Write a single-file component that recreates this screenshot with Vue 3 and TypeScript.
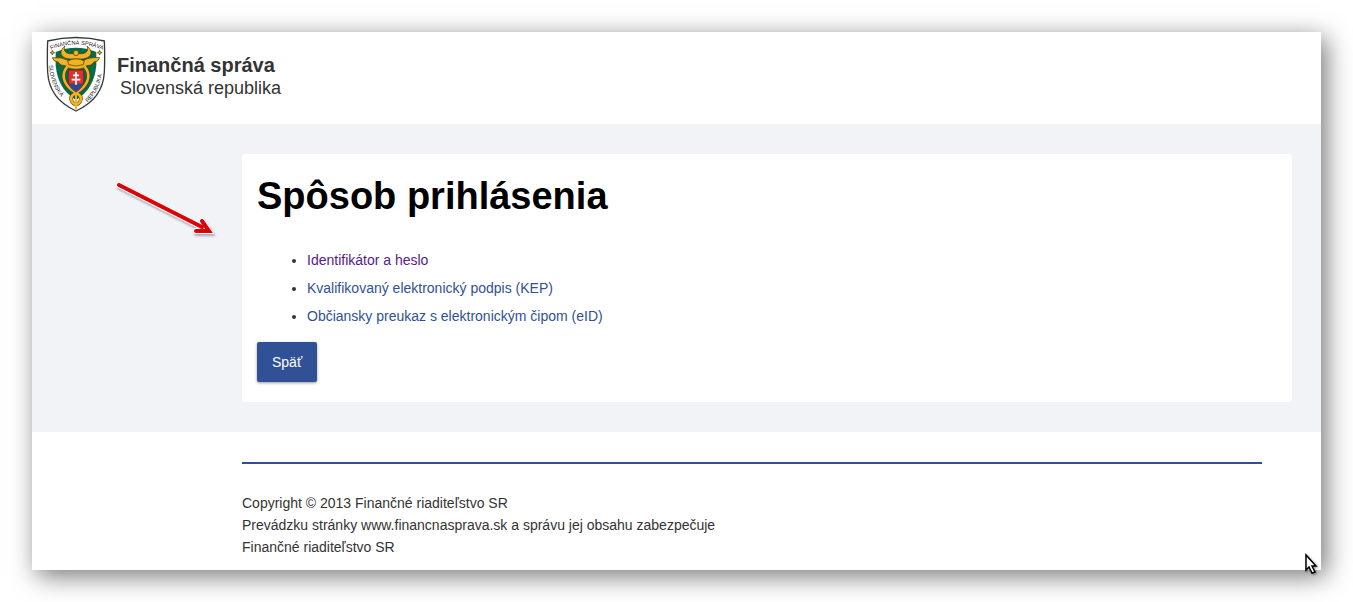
<script setup lang="ts">
interface LoginMethod {
  label: string
  href: string
  visited: boolean
}

const methods: LoginMethod[] = [
  { label: 'Identifikátor a heslo', href: '#heslo', visited: true },
  { label: 'Kvalifikovaný elektronický podpis (KEP)', href: '#kep', visited: false },
  { label: 'Občiansky preukaz s elektronickým čipom (eID)', href: '#eid', visited: false },
]

const footerLines: string[] = [
  'Copyright © 2013 Finančné riaditeľstvo SR',
  'Prevádzku stránky www.financnasprava.sk a správu jej obsahu zabezpečuje',
  'Finančné riaditeľstvo SR',
]
</script>

<template>
  <div class="stage">
    <div class="window">
      <header class="header">
        <svg class="crest" viewBox="26 16 186 231" aria-hidden="true">
          <defs>
            <path id="arc-top" d="M44 57 Q119 26 200 58" />
            <path id="arc-left" d="M38 98 C40 146 54 188 102 224" />
            <path id="arc-right" d="M148 221 C186 188 198 146 201 88" />
          </defs>
          <path d="M34 31 Q119 10 204 31 Q206 80 204 125 C201 180 168 219 119 241 C70 219 37 180 34 125 Q32 80 34 31Z" fill="#fff" stroke="#333b36" stroke-width="4" />
          <path d="M58 64 Q119 38 180 64 L180 104 C176 150 157 186 119 208 C81 186 62 150 58 104Z" fill="#086b45" />
          <g fill="#f0b323" stroke="#49340c" stroke-width="2">
            <path d="M48 59 L50 64 L55 66 L50 68 L48 73 L46 68 L41 66 L46 64Z" />
            <path d="M190 59 L192 64 L197 66 L192 68 L190 73 L188 68 L183 66 L188 64Z" />
            <path d="M48 81 Q76 78 98 90 L140 90 Q162 78 190 81 L184 91 L173 94 L164 103 L151 105 L144 112 Q119 120 94 112 L87 105 L74 103 L65 94 L54 91Z" />
            <path d="M102 85 C74 84 64 63 86 46 C80 60 89 70 104 69 L134 69 C149 70 158 60 152 46 C174 63 164 84 136 85Z" />
            <circle cx="119" cy="67" r="8" />
            <path d="M94 91 Q119 78 144 91 L141 102 Q119 110 97 102Z" />
          </g>
          <g fill="none" stroke="#49340c" stroke-width="11">
            <path d="M93 108 C72 132 84 160 104 176 C120 188 142 194 131 213 Q128 218 121 222" />
            <path d="M145 108 C166 132 154 160 134 176 C118 188 96 194 107 213 Q110 218 117 222" />
          </g>
          <g fill="none" stroke="#f0b323" stroke-width="8">
            <path d="M93 108 C72 132 84 160 104 176 C120 188 142 194 131 213 Q128 218 121 222" />
            <path d="M145 108 C166 132 154 160 134 176 C118 188 96 194 107 213 Q110 218 117 222" />
            <path d="M119 180 V236" stroke-width="6" />
          </g>
          <path d="M96 118 H142 V152 Q140 172 119 184 Q98 172 96 152Z" fill="#df302d" stroke="#5f211b" stroke-width="2" />
          <path d="M99 162 Q109 154 119 163 Q129 154 139 162 Q132 175 119 182 Q106 175 99 162Z" fill="#244b99" />
          <path d="M119 124 V162 M110 134 H128 M106 147 H132" fill="none" stroke="#fff" stroke-width="5" />
          <text class="crest-text"><textPath href="#arc-top">FINANČNÁ SPRÁVA</textPath></text>
          <text class="crest-text"><textPath href="#arc-left" startOffset="6">SLOVENSKÁ</textPath></text>
          <text class="crest-text"><textPath href="#arc-right" startOffset="8">REPUBLIKA</textPath></text>
        </svg>
        <div class="brand">
          <div class="brand-name">Finančná správa</div>
          <div class="brand-sub">Slovenská republika</div>
        </div>
      </header>

      <main class="main">
        <section class="panel">
          <h1 class="title">Spôsob prihlásenia</h1>
          <ul class="methods">
            <li v-for="m in methods" :key="m.href">
              <a :href="m.href" :class="{ visited: m.visited }">{{ m.label }}</a>
            </li>
          </ul>
          <button type="button" class="back">Späť</button>
        </section>
        <svg class="arrow" width="110" height="66" viewBox="0 0 110 66" aria-hidden="true">
          <g fill="none" stroke="#fff" stroke-width="6" stroke-linecap="round">
            <path d="M9 10 L92 52" />
            <path d="M92 46 L99 56 L86 56" />
          </g>
          <g fill="none" stroke="#dc0008" stroke-width="4" stroke-linecap="round">
            <path d="M9 10 L92 52" />
            <path d="M92 46 L99 56 L86 56" />
          </g>
        </svg>
      </main>

      <footer class="footer">
        <div class="footer-text">
          <div v-for="line in footerLines" :key="line">{{ line }}</div>
        </div>
      </footer>

      <svg class="cursor" width="16" height="24" viewBox="0 0 16 24" aria-hidden="true">
        <path d="M3 3 V18 L6 15 L9 21 L12 20 L9 14 H13Z" fill="#fff" stroke="#000" stroke-width="1.5" />
      </svg>
    </div>
  </div>
</template>

<style>
body {
  margin: 0;
  background: #fff;
}
</style>

<style scoped>
.stage {
  padding: 32px;
  overflow: hidden;
  font-family: "Liberation Sans", Arial, sans-serif;
  font-size: 14px;
  color: #333;
}

.window {
  position: relative;
  background: #fff;
  box-shadow: 5px 6px 24px rgba(0, 0, 0, 0.54);
}

.header {
  display: flex;
  align-items: flex-start;
  gap: 10px;
  box-sizing: border-box;
  min-height: 92px;
  padding: 4px 13px;
}

.crest {
  width: 62px;
  height: 77px;
}

.crest-text {
  font-size: 17px;
  fill: #222;
}

.brand {
  padding-top: 17px;
}

.brand-name {
  font-size: 20px;
  line-height: 24px;
  font-weight: bold;
}

.brand-sub {
  padding-left: 3px;
  font-size: 18px;
  line-height: 22px;
}

.main {
  position: relative;
  padding: 30px 29px 30px 210px;
  background: #f1f3f7;
}

.panel {
  padding: 16px 15px 20px;
  background: #fff;
  border-radius: 3px;
}

.title {
  margin: 0;
  font-size: 38px;
  line-height: 52px;
  color: #000;
}

.methods {
  margin: 24px 0 12px;
  padding-left: 50px;
  line-height: 28px;
}

.methods a {
  color: #315196;
  text-decoration: none;
}

.methods a.visited {
  color: #551a8b;
}

.back {
  display: block;
  height: 40px;
  padding: 0 15px;
  border: 0;
  border-radius: 2px;
  background: #315196;
  color: #fff;
  font-family: inherit;
  font-size: 14px;
  box-shadow: 0 1px 3px rgba(0, 0, 0, 0.4);
}

.arrow {
  position: absolute;
  left: 78px;
  top: 51px;
  filter: drop-shadow(1px 2px 1px rgba(0, 0, 0, 0.3));
}

.footer {
  padding: 30px 59px 12px 210px;
}

.footer-text {
  padding-top: 28px;
  border-top: 2px solid #315196;
  line-height: 22px;
}

.cursor {
  position: absolute;
  right: 2px;
  bottom: -6px;
  filter: drop-shadow(1px 1px 1px rgba(0, 0, 0, 0.4));
}
</style>
